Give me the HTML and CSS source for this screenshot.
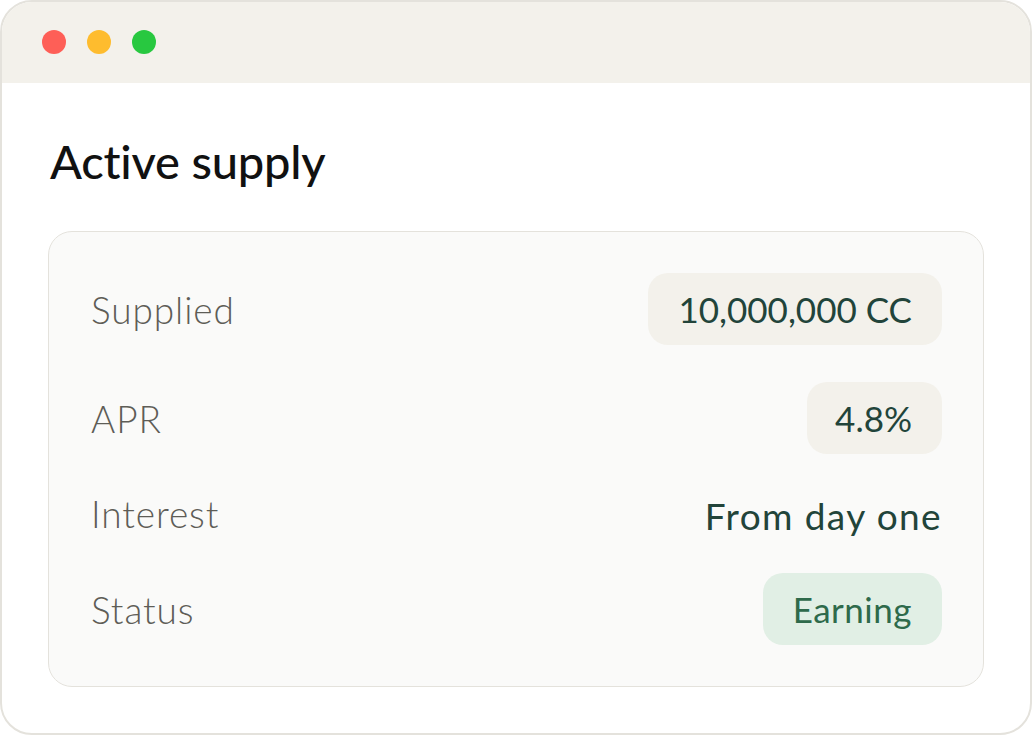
FILE: index.html
```html
<!DOCTYPE html>
<html lang="en">
<head>
  <meta charset="UTF-8">
  <meta name="viewport" content="width=device-width, initial-scale=1.0">
  <title>Active supply</title>
  <link rel="stylesheet" href="styles.css">
</head>
<body>
  <!-- Окно -->
  <div class="window">
    <div class="titlebar">
      <span class="dot dot-red"></span>
      <span class="dot dot-yellow"></span>
      <span class="dot dot-green"></span>
    </div>

    <div class="content">
      <h1>Active supply</h1>

      <div class="card">
        <div class="row">
          <span class="label">Supplied</span>
          <span class="pill">10,000,000 CC</span>
        </div>
        <div class="row">
          <span class="label">APR</span>
          <span class="pill pill-short">4.8%</span>
        </div>
        <div class="row row-plain">
          <span class="label">Interest</span>
          <span class="value">From day one</span>
        </div>
        <div class="row">
          <span class="label">Status</span>
          <span class="pill pill-green">Earning</span>
        </div>
      </div>
    </div>
  </div>
</body>
</html>
```

FILE: styles.css
```css
:root {
  --border-color: #e4e2dc;
  --bar-bg: #f3f1eb;
  --card-bg: #fafaf9;
  --label-color: #5e5d57;
  --value-color: #22443a;
  --green-text: #2e6a4b;
  --green-bg: #e1efe5;
  --font-family: Lato, 'Noto Sans', sans-serif;
}
* {
  box-sizing: border-box;
  margin: 0;
  padding: 0;
}
body {
  font-family: var(--font-family);
  background: #fff;
  width: 1032px;
  height: 735px;
  overflow: hidden;
}
/* Окно */
.window {
  width: 1032px;
  height: 735px;
  border: 2px solid var(--border-color);
  border-radius: 32px;
  overflow: hidden;
  background: #fff;
}
.titlebar {
  height: 81px;
  background: var(--bar-bg);
  display: flex;
  align-items: center;
  gap: 21px;
  padding: 0 0 2px 40px;
}
.dot {
  width: 24px;
  height: 24px;
  border-radius: 50%;
}
.dot-red { background: #fe5f57; }
.dot-yellow { background: #febc2e; }
.dot-green { background: #28c840; }
/* Контент */
.content {
  padding: 48px 46px 0 46px;
}
h1 {
  font-size: 47px;
  font-weight: 500;
  color: #111;
  line-height: 60px;
  padding-left: 2px;
  letter-spacing: -0.2px;
}
.card {
  margin-top: 40px;
  height: 456px;
  background: var(--card-bg);
  border: 1.5px solid var(--border-color);
  border-radius: 24px;
  padding: 41px 41px 0 42px;
  display: flex;
  flex-direction: column;
  gap: 37px;
}
.row {
  display: flex;
  align-items: center;
  justify-content: space-between;
}
.row-plain {
  height: 45px;
}
.label {
  font-size: 37px;
  color: var(--label-color);
  font-weight: 300;
  letter-spacing: 0.9px;
}
.pill {
  height: 72px;
  display: inline-flex;
  align-items: center;
  padding: 0 30px;
  border-radius: 20px;
  background: var(--bar-bg);
  color: var(--value-color);
  font-size: 35px;
}
.pill-short {
  padding: 0 30px 0 28px;
}
.pill-green {
  background: var(--green-bg);
  color: var(--green-text);
  letter-spacing: 0.5px;
}
.value {
  font-size: 37px;
  color: var(--value-color);
  font-weight: 400;
  letter-spacing: 1.4px;
  margin-top: 4px;
}
```
